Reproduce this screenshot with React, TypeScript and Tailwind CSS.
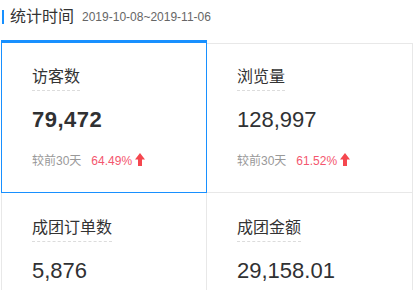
import React from "react";

type CardProps = {
  label: string;
  value: string;
  bold?: boolean;
  percent?: string;
  className: string;
};

function UpArrow() {
  return (
    <svg width="10" height="13" viewBox="0 0 10 13" className="mb-[1px] ml-[3px]">
      <path d="M5 0 L10 6.5 L7 6.5 L7 13 L3 13 L3 6.5 L0 6.5 Z" fill="#f5474f" />
    </svg>
  );
}

function Card({ label, value, bold, percent, className }: CardProps) {
  return (
    <div className={`pl-[30px] ${className}`}>
      <div className="w-fit border-b border-dashed border-[#dcdcdc] pb-[2px] text-[16px] leading-[22px] text-[#333]">
        {label}
      </div>
      <div
        className={`mt-[18px] text-[22px] leading-[22px] text-[#303133] ${bold ? "font-bold tracking-[0.5px]" : "font-normal"}`}
      >
        {value}
      </div>
      {percent && (
        <div className="mt-[24px] flex h-[12px] items-end text-[12px] leading-[12px]">
          <span className="text-[#999]">较前30天</span>
          <span className="ml-[10px] text-[#f4566e]">{percent}</span>
          <UpArrow />
        </div>
      )}
    </div>
  );
}

export default function App() {
  return (
    <div className="h-[290px] w-[415px] overflow-hidden bg-white font-['Liberation_Sans','Noto_Sans_CJK_SC',sans-serif]">
      <div className="flex h-[34px] items-center">
        <div className="ml-[2px] h-[14px] w-[2px] bg-[#1890ff]" />
        <div className="ml-[6px] text-[16px] leading-[16px] text-[#333]">统计时间</div>
        <div className="ml-[8px] text-[12px] leading-[12px] text-[#666]">2019-10-08~2019-11-06</div>
      </div>
      <div className="ml-px mt-[9px] grid grid-cols-[206px_206px]">
        <Card
          label="访客数"
          value="79,472"
          bold
          percent="64.49%"
          className="-mt-[3px] border border-t-[3px] border-[#1890ff] pt-[23px] pb-[25px]"
        />
        <Card
          label="浏览量"
          value="128,997"
          percent="61.52%"
          className="border-r border-t border-b border-[#e8e8e8] pt-[22px] pb-[25px]"
        />
        <Card
          label="成团订单数"
          value="5,876"
          className="border-l border-r border-b border-[#e8e8e8] pt-[24px] pb-[60px]"
        />
        <Card
          label="成团金额"
          value="29,158.01"
          className="border-r border-b border-[#e8e8e8] pt-[24px] pb-[60px]"
        />
      </div>
    </div>
  );
}
